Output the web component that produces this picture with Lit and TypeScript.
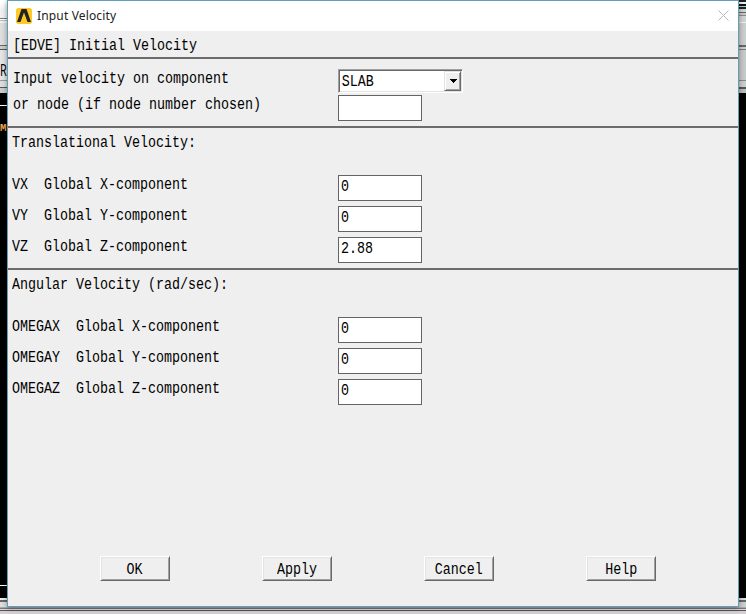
import { LitElement, html, css } from "lit";
import { customElement } from "lit/decorators.js";

@customElement("app-root")
export class AppRoot extends LitElement {
  static styles = css`
    * { box-sizing: border-box; }
    :host { display: grid; grid-template-columns: 7px 732px 7px; width: 746px; height: 614px; overflow: hidden; position: relative; background: linear-gradient(#d8d4d6 0 607px, #aaa 607px 608px, #777 608px 609px, #e0dcde 609px 610px, #555 610px 611px, #d5d0d3 611px); font: 16px/16px "Liberation Mono", monospace; color: #000; }
    .edge { height: 607px; display: flex; flex-direction: column; overflow: hidden; background: linear-gradient(#fff 0 3px, #f0f0f0 10px 18px, #777 18px 19px, #fff 19px 20px, #bbb 20px 21px, #eee 21px 23px, #ddd 23px 45px, #666 45px 46px, #ccc 46px 49px, #555 49px 50px, #e4e4e4 50px 80px, #999 80px 81px, #ddd 81px 87px, #555 87px 88px, #ccc 88px 93px, #000 93px 598px, #eee 598px 600px, #666 600px 602px, #ddd 602px); }
    .edge.right { background: linear-gradient(#222 0 2px, #eee 2px 4px, #111 4px 6px, #9dd 6px 7px, #222 7px 9px, #d0d0d0 9px 12px, #666 12px 13px, #c8c8c8 13px 15px, #888 15px 16px, #d0d0d0 16px 22px, #eee 22px 23px, #ccc 23px 45px, #666 45px 47px, #ccc 47px 49px, #777 49px 50px, #c8c8c8 50px 80px, #888 80px 81px, #ccc 81px 87px, #555 87px 89px, #bbb 89px 93px, #000 93px 598px, #ddd 598px 600px, #666 600px 602px, #ccc 602px); }
    .letter { font: 17px/20px "Noto Sans", sans-serif; margin-top: 60px; height: 20px; width: max-content; transform: scaleX(.64); transform-origin: 0 0; }
    .rule { height: 1px; background: #fff; margin-top: 25px; flex: none; }
    .m { color: #f5a64a; font: bold 11px/12px "Liberation Mono", monospace; margin-top: 16px; height: 12px; }
    .rule.low { margin-top: 451px; }
    .window { height: 607px; border: 1px solid #5f9fb8; background: #efefef; display: flex; flex-direction: column; z-index: 1; box-shadow: 0 1px 5px #0006; }
    .bar { height: 30px; background: #fff; display: flex; align-items: center; padding: 0 9px 0 8px; flex: none; }
    .logo { width: 16px; height: 16px; margin-right: 5px; }
    .caption { flex: 1; font: 12px/16px "Noto Sans", sans-serif; letter-spacing: .15px; color: #222; }
    .close { width: 11px; height: 11px; margin-top: -2px; }
    .t { display: block; white-space: pre; width: max-content; transform: scaleX(.8333); transform-origin: 0 0; }
    .head { height: 28px; padding: 7px 0 0 5px; border-bottom: 2px solid #6c6c6c; flex: none; }
    section { padding-left: 4px; border-bottom: 2px solid #6c6c6c; flex: none; }
    .s1 { height: 69px; padding: 10px 0 0 5px; }
    .s2 { height: 142px; padding-top: 7px; }
    .s3 { height: 286px; padding-top: 7px; border: 0; }
    .row { display: grid; grid-template-columns: 326px 125px; height: 31px; align-items: start; }
    .s1 .row { height: 26px; grid-template-columns: 325px 125px; }
    .rows { padding-top: 24px; }
    .row > .t { margin-top: 2px; }
    .field { width: 84px; height: 26px; background: #fff; border: 1px solid #646464; padding: 3px 0 0 2px; }
    .combo { width: 125px; height: 24px; border: 1px solid; border-color: #a0a0a0 #fff #fff #a0a0a0; display: flex; background: #fff; box-shadow: inset 1px 1px #696969, inset -1px -1px #e3e3e3; padding: 1px; }
    .combo .t { padding: 3px 0 0 2px; width: 104px; }
    .pick { flex: none; margin-left: auto; width: 17px; height: 20px; background: #efefef; border: 1px solid; border-color: #e3e3e3 #696969 #696969 #e3e3e3; box-shadow: inset 1px 1px #fff, inset -1px -1px #a0a0a0; display: flex; align-items: center; justify-content: center; padding-left: 1px; }
    .buttons { display: flex; gap: 92px; padding: 0 0 0 92px; }
    button { width: 70px; height: 25px; padding: 2px 0 0; display: grid; justify-content: center; align-items: center; font: inherit; color: inherit; background: #efefef; border: 1px solid; border-color: #fff #696969 #696969 #fff; box-shadow: inset 1px 1px #e3e3e3, inset -1px -1px #a0a0a0; }
    button .t { transform-origin: 50% 0; }
  `;

  private rows(items: string[][]) {
    return html`<div class="rows">${items.map(([name, value]) => html`
      <div class="row"><span class="t">${name}</span><div class="field"><span class="t">${value}</span></div></div>`)}</div>`;
  }

  render() {
    return html`
      <div class="edge"><span class="letter">R</span><i class="rule"></i><span class="m">M</span><i class="rule low"></i></div>
      <div class="window">
        <div class="bar">
          <svg class="logo" viewBox="0 0 16 16"><rect width="16" height="16" rx="2.5" fill="#ffc928"/><path d="M5.500 1h5L15 14h-3.500L8 4.500 4.500 14H1z" fill="#242424"/></svg>
          <span class="caption">Input Velocity</span>
          <svg class="close" viewBox="0 0 11 11"><path d="M.5.5l10 10M10.500.5l-10 10" stroke="#b8b8b8" fill="none"/></svg>
        </div>
        <div class="head"><span class="t">[EDVE] Initial Velocity</span></div>
        <section class="s1">
          <div class="row"><span class="t">Input velocity on component</span>
            <div class="combo"><span class="t">SLAB</span><span class="pick"><svg width="7" height="4" viewBox="0 0 7 4" shape-rendering="crispEdges"><path d="M0 0h7v1H6v1H5v1H4v1H3V3H2V2H1V1H0z"/></svg></span></div></div>
          <div class="row"><span class="t">or node (if node number chosen)</span><div class="field"></div></div>
        </section>
        <section class="s2"><span class="t">Translational Velocity:</span>
          ${this.rows([["VX  Global X-component", "0"], ["VY  Global Y-component", "0"], ["VZ  Global Z-component", "2.88"]])}
        </section>
        <section class="s3"><span class="t">Angular Velocity (rad/sec):</span>
          ${this.rows([["OMEGAX  Global X-component", "0"], ["OMEGAY  Global Y-component", "0"], ["OMEGAZ  Global Z-component", "0"]])}
        </section>
        <div class="buttons">${["OK", "Apply", "Cancel", "Help"].map((b) => html`<button><span class="t">${b}</span></button>`)}</div>
      </div>
      <div class="edge right"></div>`;
  }
}
